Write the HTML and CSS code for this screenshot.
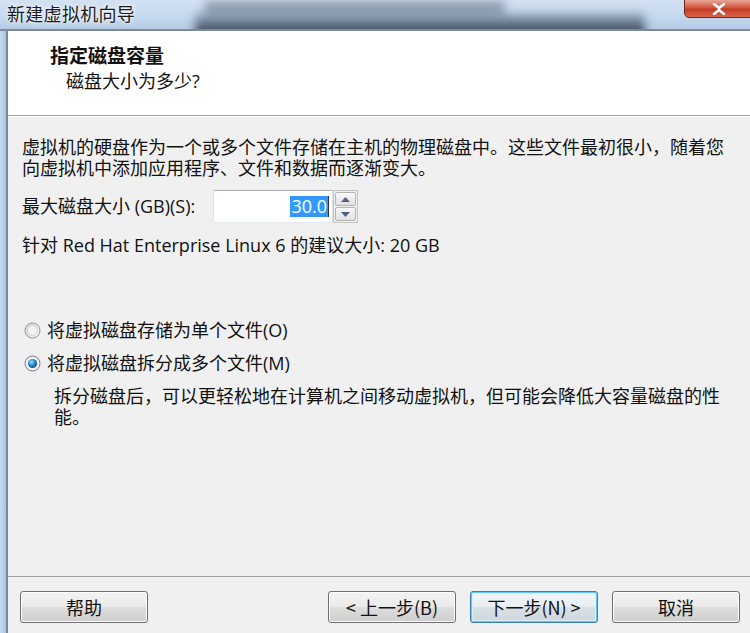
FILE: index.html
```html
<!DOCTYPE html>
<html lang="zh-CN">
<head>
<meta charset="utf-8"/>
<meta content="width=device-width, initial-scale=1.0" name="viewport"/>
<title>新建虚拟机向导</title>
<link rel="stylesheet" href="styles.css">
</head>
<body>
<div class="window">
  <div class="titlebar">
    <div class="title">新建虚拟机向导</div>
    <div class="glass"></div>
    <div class="close">
      <svg width="16" height="12" viewBox="0 0 16 12">
        <path d="M3 1 L8 5 L13 1 M3 11 L8 7 L13 11" stroke="#fff" stroke-width="2.6" fill="none" stroke-linecap="round"/>
      </svg>
    </div>
  </div>
  <div class="frame">
    <div class="frame-left"></div>
    <div class="dialog">
      <div class="header">
        <div class="header-title">指定磁盘容量</div>
        <div class="header-sub">磁盘大小为多少?</div>
      </div>
      <div class="body">
        <p class="text">虚拟机的硬盘作为一个或多个文件存储在主机的物理磁盘中。这些文件最初很小，随着您<br>向虚拟机中添加应用程序、文件和数据而逐渐变大。</p>
        <div class="size-row">
          <span class="text size-label">最大磁盘大小 (GB)(S):</span>
          <div class="spin">
            <div class="spin-field"><span class="sel">30.0</span><span class="caret"></span></div>
            <div class="spin-btns">
              <div class="spin-btn"><svg width="9" height="5" viewBox="0 0 9 5"><path d="M0 5 L4.5 0 L9 5 Z" fill="#4d6185"/></svg></div>
              <div class="spin-btn"><svg width="9" height="5" viewBox="0 0 9 5"><path d="M0 0 L4.5 5 L9 0 Z" fill="#4d6185"/></svg></div>
            </div>
          </div>
        </div>
        <p class="text hint">针对 Red Hat Enterprise Linux 6 的建议大小: 20 GB</p>

        <div class="options">
          <label class="radio-row">
            <svg class="radio" width="17" height="17" viewBox="0 0 17 17">
              <defs>
                <linearGradient id="rg" x1="0" y1="0" x2="1" y2="1">
                  <stop offset="0" stop-color="#d6d6d6"/>
                  <stop offset="1" stop-color="#fbfbfb"/>
                </linearGradient>
              </defs>
              <circle cx="8.5" cy="8.5" r="7.5" fill="url(#rg)" stroke="#929292"/>
              <circle cx="8.5" cy="8.5" r="5" fill="#f4f4f4" stroke="#d0d0d0"/>
            </svg>
            <span class="text">将虚拟磁盘存储为单个文件(O)</span>
          </label>
          <label class="radio-row">
            <svg class="radio" width="17" height="17" viewBox="0 0 17 17">
              <defs>
                <radialGradient id="dot" cx="0.4" cy="0.35" r="0.7">
                  <stop offset="0" stop-color="#9fe0ff"/>
                  <stop offset="0.5" stop-color="#2a8ad4"/>
                  <stop offset="1" stop-color="#0f3f7a"/>
                </radialGradient>
              </defs>
              <circle cx="8.5" cy="8.5" r="7.5" fill="#f2f2f2" stroke="#6c7a8a"/>
              <circle cx="8.5" cy="8.5" r="4.6" fill="url(#dot)"/>
            </svg>
            <span class="text">将虚拟磁盘拆分成多个文件(M)</span>
          </label>
          <p class="text desc">拆分磁盘后，可以更轻松地在计算机之间移动虚拟机，但可能会降低大容量磁盘的性<br>能。</p>
        </div>
      </div>
      <div class="footer">
        <button class="btn">帮助</button>
        <div class="spacer"></div>
        <button class="btn">&lt; 上一步(B)</button>
        <button class="btn focus">下一步(N) &gt;</button>
        <button class="btn">取消</button>
      </div>
    </div>
  </div>
</div>
</body>
</html>
```

FILE: styles.css
```css
body {
  margin: 0;
  width: 750px;
  height: 633px;
  overflow: hidden;
  background: #b9d1ea;
  font-family: "Open Sans", "Noto Sans CJK SC", sans-serif;
  color: #111;
}
.window {
  display: flex;
  flex-direction: column;
  height: 633px;
}
.titlebar {
  position: relative;
  height: 29px;
  background: linear-gradient(to bottom, #d3e2f2, #c3d8ee 60%, #b4cbe4);
  border-bottom: 2px solid #7d8a99;
  overflow: hidden;
}
.title {
  position: relative;
  z-index: 2;
  padding-left: 7px;
  line-height: 26px;
  font-family: "Noto Sans CJK SC", sans-serif;
  font-size: 18px;
  letter-spacing: 0.3px;
  color: #1b1b1b;
  text-shadow: 0 0 6px #fff, 0 0 3px #fff;
}
.glass {
  position: absolute;
  left: 195px;
  top: 13px;
  width: 450px;
  height: 24px;
  background: linear-gradient(to bottom, rgba(60,75,95,0.25), rgba(30,40,55,0.95));
  filter: blur(5px);
}
.glass::before {
  content: "";
  position: absolute;
  left: 10px;
  top: -12px;
  width: 300px;
  height: 12px;
  background: rgba(60,75,95,0.45);
}
.close {
  position: absolute;
  right: -10px;
  top: -1px;
  width: 76px;
  height: 19px;
  border: 1px solid #6d2a22;
  border-radius: 0 0 5px 5px;
  background: linear-gradient(to bottom, #e9a896, #d1553c 45%, #c23b22 55%, #d9654a);
  display: flex;
  align-items: center;
  padding-left: 26px;
  box-sizing: border-box;
}
.frame {
  flex: 1;
  display: flex;
}
.frame-left {
  width: 6px;
  background: linear-gradient(to right, #c5daef, #a9c4e3);
  border-right: 2px solid #7b8796;
}
.dialog {
  flex: 1;
  display: flex;
  flex-direction: column;
  background: #f0f0f0;
}
.header {
  height: 85px;
  background: #fff;
  border-bottom: 1px solid #a0a0a0;
  box-sizing: border-box;
  padding: 11px 0 0 42px;
}
.header-title {
  font-family: "Noto Sans CJK SC", sans-serif;
  font-weight: bold;
  font-size: 19px;
  line-height: 26px;
}
.header-sub {
  font-size: 18px;
  line-height: 26px;
  padding-left: 16px;
}
.body {
  flex: 1;
  border-top: 1px solid #fff;
  padding: 20px 0 0 14px;
}
.text {
  margin: 0;
  font-size: 18px;
  line-height: 21px;
  white-space: nowrap;
}
.size-row {
  display: flex;
  align-items: center;
  margin-top: 11px;
  height: 33px;
}
.size-label {
  width: 191px;
}
.spin {
  display: flex;
  height: 33px;
}
.spin-field {
  width: 120px;
  box-sizing: border-box;
  border: 1px solid #abadb3;
  border-color: #abadb3 #dbdfe6 #e3e9ef #e2e3ea;
  border-radius: 2px 0 0 2px;
  background: #fff;
  display: flex;
  align-items: center;
  justify-content: flex-end;
  padding-right: 3px;
}
.sel {
  background: #3399ff;
  color: #fff;
  font-size: 18px;
  line-height: 21px;
  padding: 0 1px;
}
.caret {
  width: 1px;
  height: 21px;
  background: #333;
}
.spin-btns {
  width: 25px;
  display: flex;
  flex-direction: column;
  gap: 1px;
  padding: 1px;
  box-sizing: border-box;
  border: 1px solid #c4c4c4;
  background: #f0f0f0;
}
.spin-btn {
  flex: 1;
  display: flex;
  align-items: center;
  justify-content: center;
  border: 1px solid #b4b4b4;
  border-radius: 2px;
  background: linear-gradient(to bottom, #f9f9f9, #ececec 50%, #e0e0e0);
}
.hint {
  margin-top: 12px;
}
.options {
  margin-top: 64px;
  padding-left: 2px;
}
.radio-row {
  display: flex;
  align-items: center;
  gap: 6px;
  height: 21px;
  margin-bottom: 12px;
}
.desc {
  padding-left: 30px;
}
.footer {
  height: 57px;
  border-top: 1px solid #a0a0a0;
  box-sizing: border-box;
  display: flex;
  align-items: flex-start;
  padding: 14px 10px 0 12px;
  gap: 14px;
}
.spacer {
  flex: 1;
}
.btn {
  width: 128px;
  height: 32px;
  border: 1px solid #707070;
  border-radius: 3px;
  background: linear-gradient(to bottom, #f3f3f3, #ebebeb 48%, #dddddd 52%, #cfcfcf);
  box-shadow: inset 0 0 0 1px #fcfcfc;
  font-family: "Noto Sans CJK SC", sans-serif;
  font-size: 18px;
  color: #111;
  padding: 0;
}
.btn.focus {
  border-color: #3c7fb1;
  box-shadow: inset 0 0 0 1px #63c9f2, inset 0 0 0 2px #d8effa;
  background: linear-gradient(to bottom, #f1f6f9, #e8eef2 48%, #d9e1e6 52%, #cdd7dd);
}
```
